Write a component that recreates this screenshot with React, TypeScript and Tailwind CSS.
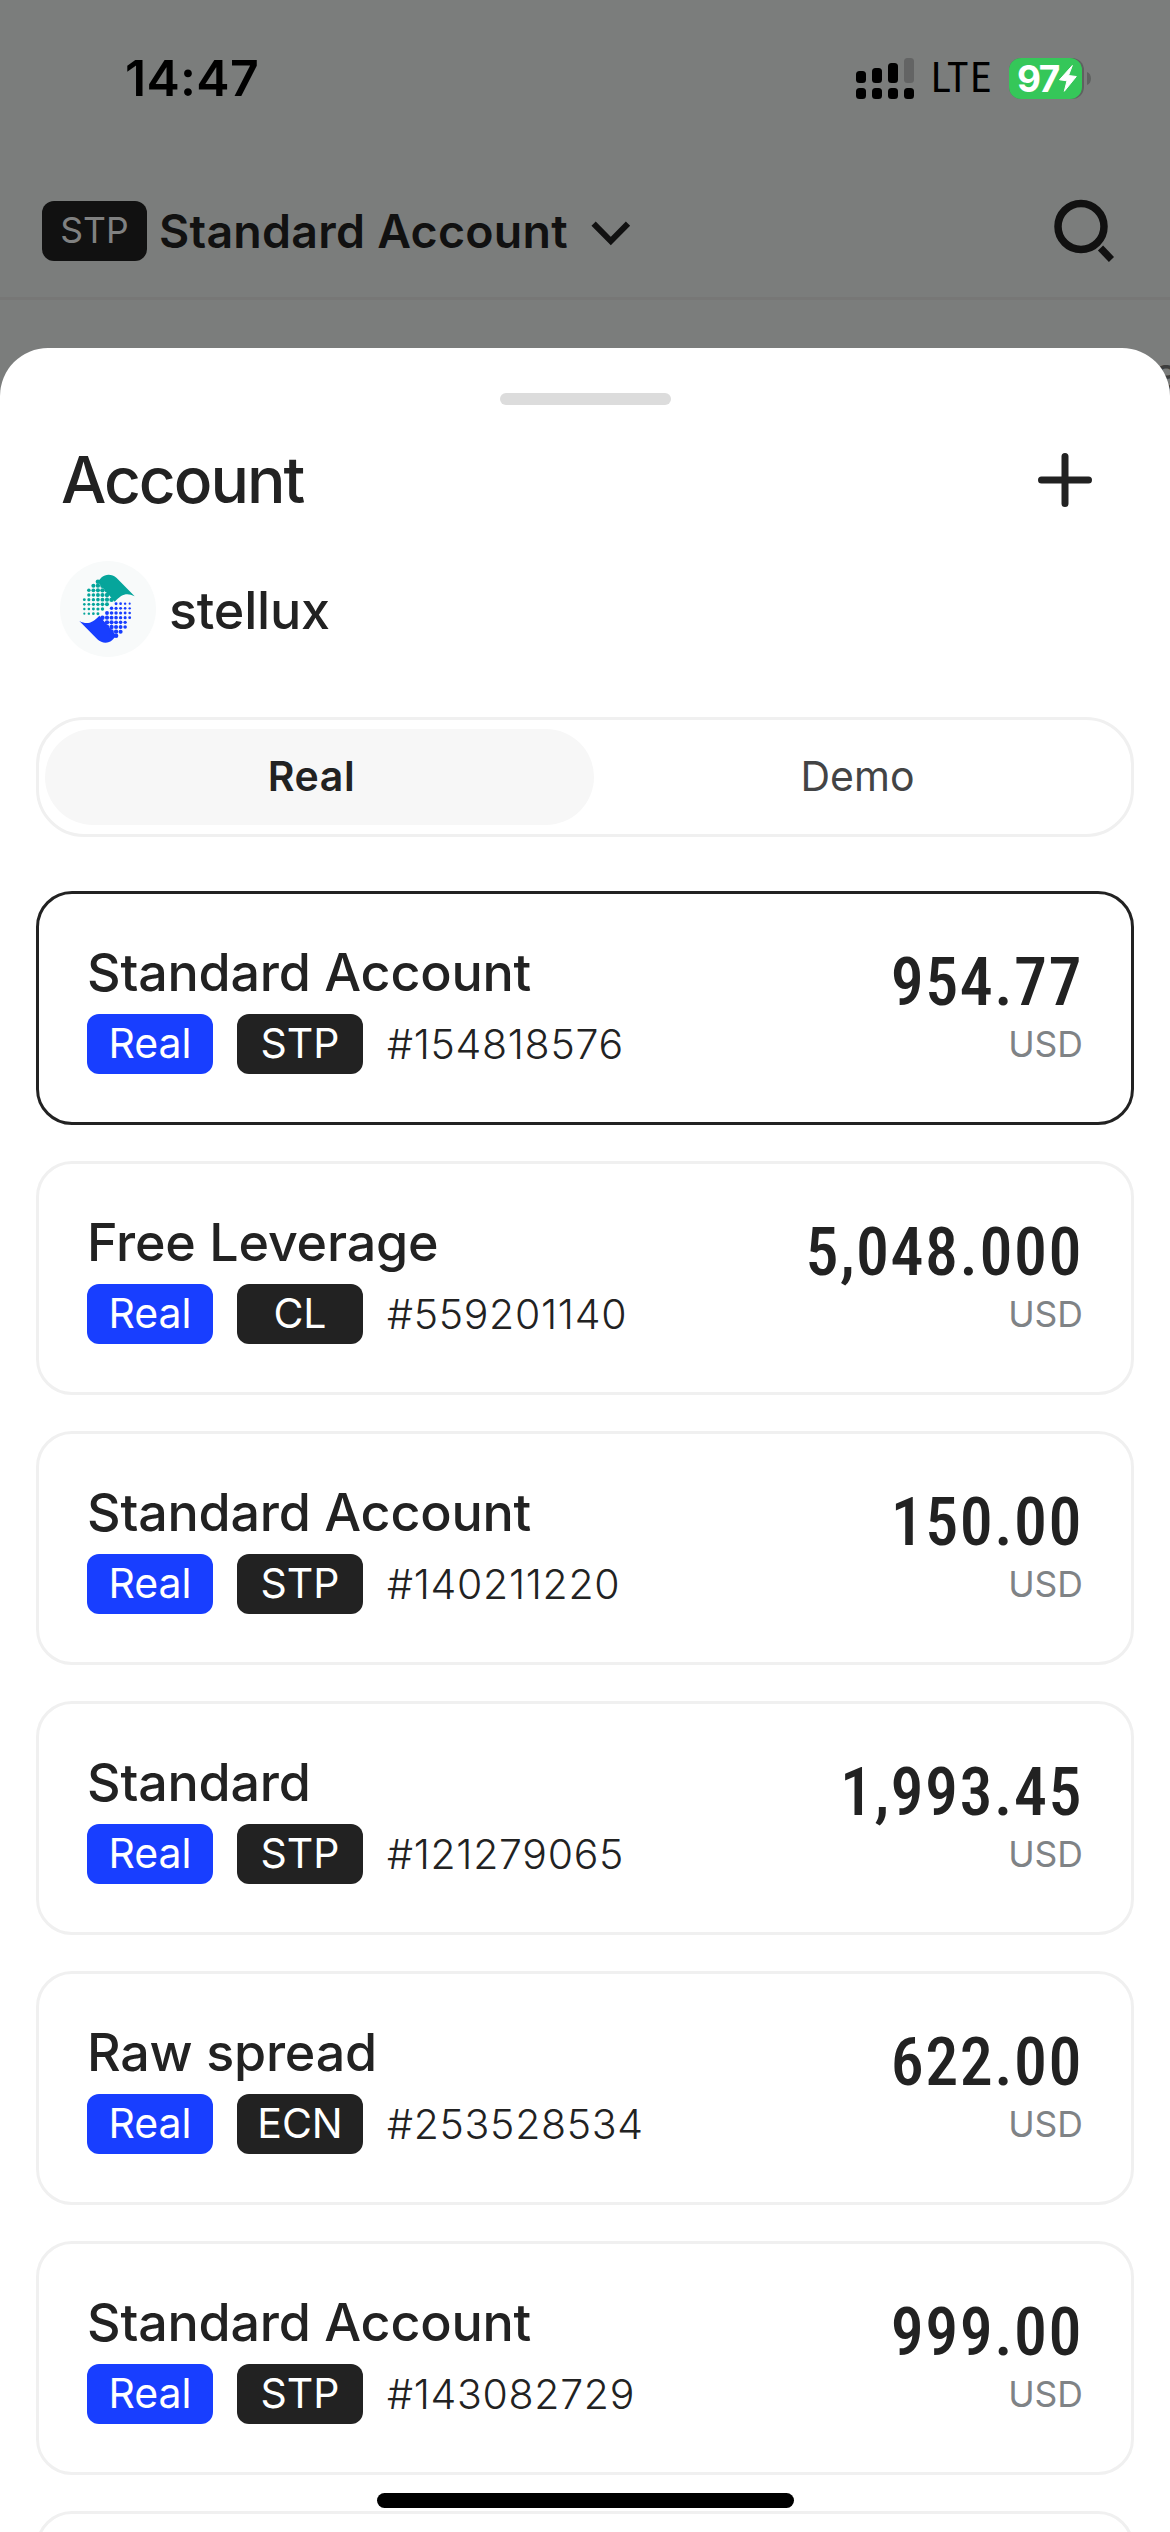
import { useState } from "react";
import clsx from "clsx";

interface Account {
  name: string;
  type: string;
  id: string;
  balance: string;
}

const ACCOUNTS: Account[] = [
  { name: "Standard Account", type: "STP", id: "154818576", balance: "954.77" },
  { name: "Free Leverage", type: "CL", id: "559201140", balance: "5,048.000" },
  { name: "Standard Account", type: "STP", id: "140211220", balance: "150.00" },
  { name: "Standard", type: "STP", id: "121279065", balance: "1,993.45" },
  { name: "Raw spread", type: "ECN", id: "253528534", balance: "622.00" },
  { name: "Standard Account", type: "STP", id: "143082729", balance: "999.00" },
];

// [y, first column, last column] of the halftone half of the logo
const DOT_ROWS = [
  [62, 3, 3],
  [74, 2, 4],
  [88, 1, 5],
  [102, 1, 5],
  [116, 0, 6],
  [130, 0, 5],
  [144, 0, 4],
  [158, 0, 3],
];

const DOTS = DOT_ROWS.flatMap(([y, from, to]) =>
  Array.from({ length: to - from + 1 }, (_, i) => {
    const x = 73 + (from + i) * 13.6;
    const grow = Math.min(1, ((x - 73) / 82) * 0.6 + ((158 - y) / 96) * 0.6);
    return { x, y, r: 3.2 + 4 * grow };
  })
);

function LogoHalf() {
  return (
    <>
      <path d="M113 62 L125 49 C137 38 156 38 170 51 L224 106 C200 94 185 100 164 122 Z" />
      {DOTS.map((d, i) => (
        <circle key={i} cx={d.x} cy={d.y} r={d.r} />
      ))}
    </>
  );
}

function Logo() {
  return (
    <svg className="size-24 rounded-full bg-[#f8fafa]" viewBox="0 0 288 288">
      <g fill="#06a59b">
        <LogoHalf />
      </g>
      <g fill="#183eff" transform="rotate(180 141 143)">
        <LogoHalf />
      </g>
    </svg>
  );
}

function StatusBar() {
  return (
    <div className="flex h-[156px] items-center justify-between pl-[125px] pr-[79px] text-black">
      <span className="text-[50px] font-semibold leading-none tracking-[0.3px]">14:47</span>
      <div className="flex items-center">
        <svg width="58" height="41" viewBox="0 0 58 41">
          <rect x="0" y="13" width="10" height="12" rx="3.5" />
          <rect x="16" y="10" width="10" height="15" rx="3.5" />
          <rect x="32" y="5" width="10" height="20" rx="3.5" />
          <rect x="48" y="0" width="10" height="25" rx="3.5" fill="#636464" />
          {[0, 16, 32, 48].map((x) => (
            <rect key={x} x={x} y="30" width="10" height="11" rx="3.5" />
          ))}
        </svg>
        <span className="ml-[17px] w-[78px] text-[42px] font-[450] leading-none tracking-[1.5px] [font-family:Roboto] [font-stretch:75%]">
          LTE
        </span>
        <div className="h-[41px] w-[75px] rounded-xl bg-[#5f6160]">
          <div className="flex h-[41px] w-[73px] items-center rounded-xl bg-[#35c759] pl-2 text-white">
            <span className="text-[37px] font-bold leading-none tracking-[-1.5px]">97</span>
            <svg className="-ml-px shrink-0" width="20" height="29" viewBox="0 0 20 29">
              <path
                d="M14.3 1.5 L1.5 15.8 L9 16.8 L6.3 27.3 L18.3 12.5 L10.5 11.5 Z"
                fill="white"
                stroke="white"
                strokeWidth="1"
                strokeLinejoin="round"
              />
            </svg>
          </div>
        </div>
        <svg className="ml-[3px]" width="4" height="13" viewBox="0 0 4 13">
          <path d="M0 0 C5.3 2 5.3 11 0 13 Z" fill="#5f6160" />
        </svg>
      </div>
    </div>
  );
}

function NavBar() {
  return (
    <div className="flex h-36 items-center border-b-[3px] border-[#777776] pl-[42px] pr-[56px] pt-[9px] text-[#111111]">
      <span className="flex h-15 w-[105px] items-center justify-center rounded-xl bg-[#111111] text-[35.5px] text-[#808181]">
        STP
      </span>
      <span className="ml-3 w-[409px] text-[46.5px] font-[580] leading-[62px] tracking-[0.25px]">Standard Account</span>
      <svg className="ml-[23px] mt-1" width="40" height="25" viewBox="0 0 40 25" fill="none">
        <path d="M2.6 2.6 L19.8 20 L37 2.6" stroke="currentColor" strokeWidth="6" />
      </svg>
      <svg className="ml-auto" width="60" height="64" viewBox="0 0 60 64" fill="none" stroke="currentColor">
        <circle cx="27" cy="27.5" r="23" strokeWidth="7.5" />
        <path d="M46.5 49 L57.5 60.5" strokeWidth="7.2" />
      </svg>
    </div>
  );
}

function Tabs({ value, onChange }: { value: string; onChange: (v: string) => void }) {
  return (
    <div className="mx-9 mt-15 flex h-[120px] shrink-0 items-center rounded-[48px] border-[3px] border-[#f0f0f0] px-1.5 text-[41px]">
      {["Real", "Demo"].map((tab) => (
        <button
          key={tab}
          onClick={() => onChange(tab)}
          className={clsx(
            "h-24 rounded-[48px]",
            value === tab
              ? "w-[549px] bg-[#f7f7f7] pr-4 font-semibold tracking-[0.6px]"
              : "flex-1 pr-1 text-[#434445]"
          )}
        >
          {tab}
        </button>
      ))}
    </div>
  );
}

function AccountCard({ account, selected }: { account: Account; selected: boolean }) {
  return (
    <div
      className={clsx(
        "flex h-[234px] shrink-0 justify-between rounded-[36px] border-[3px] px-12 pt-[49px]",
        selected ? "border-[#222222]" : "border-[#f0f0f0]"
      )}
    >
      <div>
        <div className="h-15 text-[52px] font-medium leading-[60px] tracking-[-0.2px]">{account.name}</div>
        <div className="mt-[11px] flex h-15 items-center gap-6 text-[41px] leading-[58px]">
          <span className="h-15 w-[126px] rounded-xl bg-[#183eff] text-center text-white">Real</span>
          <span className="h-15 w-[126px] rounded-xl bg-[#222222] text-center text-white">{account.type}</span>
          <span className="font-light tracking-[0.7px]">#{account.id}</span>
        </div>
      </div>
      <div className="pt-px text-right">
        <div className="text-[66px] font-[550] leading-[78px] tracking-[1.5px] [font-family:Roboto] [font-stretch:75%]">
          {account.balance}
        </div>
        <div className="mt-0.5 text-[35.5px] leading-[42px] text-[#7f8386]">USD</div>
      </div>
    </div>
  );
}

export default function App() {
  const [tab, setTab] = useState("Real");

  return (
    <div className="relative flex h-[2532px] w-[1170px] flex-col overflow-hidden bg-[#7b7d7c] text-[#222222] [font-family:Inter,sans-serif]">
      <StatusBar />
      <NavBar />
      {/* label scrolling off the right edge, mostly under the sheet */}
      <div className="flex h-12 justify-end overflow-visible">
        <span className="-mr-[9px] mt-[46px] text-[46px] leading-[54px] text-[#3d3e3e]">a</span>
      </div>

      <div className="relative flex flex-1 flex-col overflow-hidden rounded-t-[48px] bg-white">
        <div className="mx-auto mt-[45px] h-3 w-[171px] shrink-0 rounded-full bg-[#dcdcdc]" />
        <div className="mt-[34px] flex h-[81px] shrink-0 items-center justify-between pl-[61px] pr-[78px]">
          <h1 className="text-[64px] font-medium leading-none tracking-[-2px]">Account</h1>
          <svg width="54" height="54" viewBox="0 0 54 54" stroke="currentColor" strokeWidth="7" strokeLinecap="round">
            <path d="M27 3.5V50.5M3.5 27H50.5" />
          </svg>
        </div>
        <div className="mt-[41px] flex h-24 shrink-0 items-center gap-[13px] pl-15">
          <Logo />
          <span className="pt-[3px] text-[52px] font-medium leading-none tracking-[-0.2px]">stellux</span>
        </div>
        <Tabs value={tab} onChange={setTab} />
        <div className="mx-9 mt-[54px] flex flex-col gap-9">
          {ACCOUNTS.map((account, i) => (
            <AccountCard key={account.id} account={account} selected={i === 0} />
          ))}
          <div className="h-[234px] shrink-0 rounded-[36px] border-[3px] border-[#f0f0f0]" />
        </div>
      </div>

      <div className="absolute bottom-6 left-[377px] h-[15px] w-[417px] rounded-full bg-black" />
    </div>
  );
}
